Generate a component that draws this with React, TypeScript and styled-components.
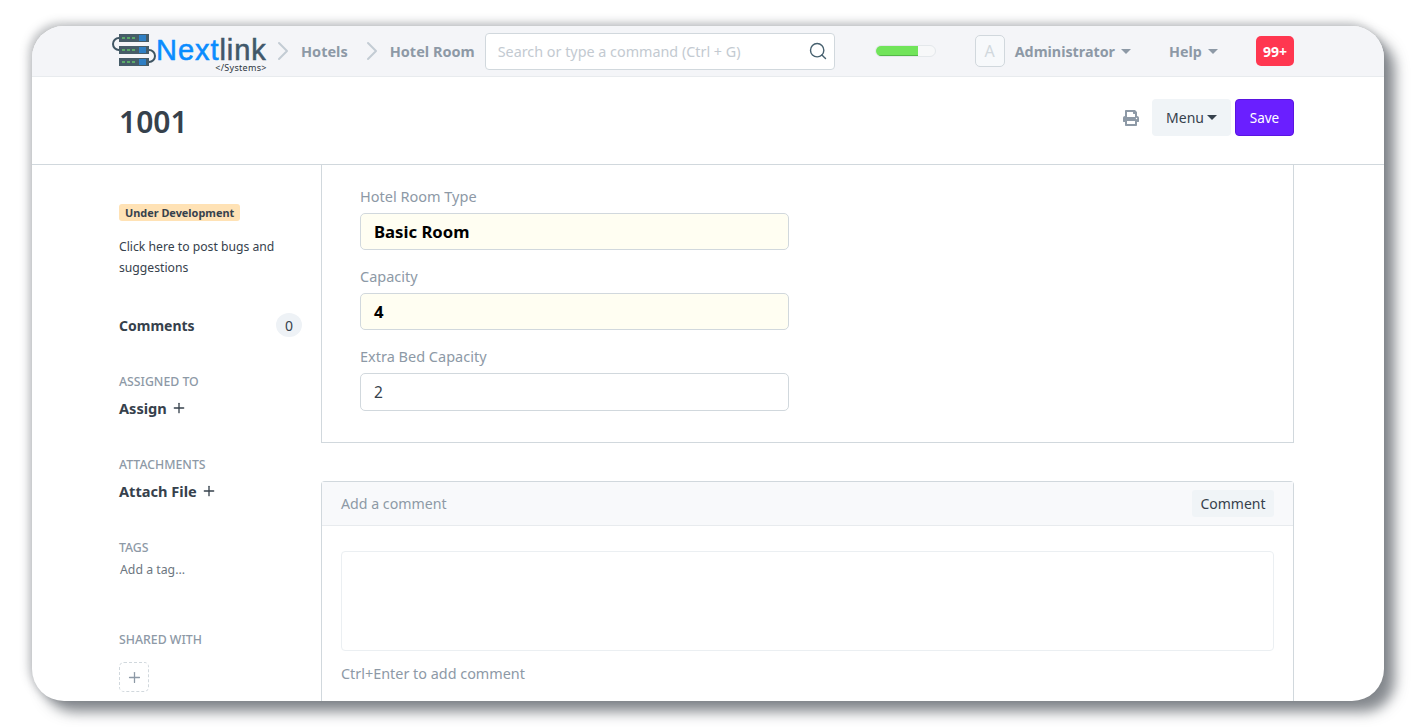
import React from 'react'
import styled, { createGlobalStyle } from 'styled-components'
import { Search, Plus, ChevronRight } from 'lucide-react'
import { FaPrint } from 'react-icons/fa'

const GlobalStyle = createGlobalStyle`
  html {
    overflow: hidden;
  }
  body {
    margin: 0;
    padding: 0;
    height: 727px;
    background: #fff;
    font-family: "Noto Sans", "Open Sans", sans-serif;
    color: #36414c;
  }
`

const Frame = styled.div`
  width: 1352px;
  height: 675px;
  margin: 0 0 0 32px;
  position: relative;
  top: 26px;
  border-radius: 32px;
  background: #fff;
  overflow: hidden;
  box-shadow: 11px 11px 13px rgba(60, 66, 74, 0.62), -3px -3px 10px rgba(60, 66, 74, 0.35);
`

const Navbar = styled.header`
  height: 50px;
  background: #f4f5f8;
  border-bottom: 1px solid #e8ebee;
  display: flex;
  align-items: center;
  padding-left: 80px;
  padding-right: 90px;
`

const LogoWrap = styled.div`
  display: flex;
  align-items: flex-start;
  width: 155px;
  height: 42px;
  flex: none;
  margin-top: 6px;
`

const LogoText = styled.div`
  position: relative;
  margin-top: 4px;
  font-family: "Liberation Sans", Arial, sans-serif;
  font-size: 29px;
  line-height: 26px;
  font-weight: 400;
  letter-spacing: 0.95px;
  -webkit-text-stroke: 0.55px currentColor;
  color: #0a8cff;
  white-space: nowrap;
`

const LogoDark = styled.span`
  color: #41586a;
`

const LogoSub = styled.div`
  position: absolute;
  right: 0;
  top: 26px;
  font-family: "Noto Sans", sans-serif;
  font-size: 9px;
  line-height: 10px;
  font-weight: 400;
  letter-spacing: 0.3px;
  -webkit-text-stroke: 0;
  color: #2c3640;
`

const Crumb = styled.span`
  margin-left: 2px;
  font-size: 14.5px;
  font-weight: 700;
  color: #8d99a6;
  white-space: nowrap;
`

const CrumbArrow = styled(ChevronRight)<{ $gap: number }>`
  margin-left: ${p => p.$gap}px;
  color: #c3ccd4;
  flex: none;
`

const SearchBox = styled.div`
  width: 350px;
  height: 37px;
  flex: none;
  box-sizing: border-box;
  margin-left: 10px;
  background: #fff;
  border: 1px solid #d1d8dd;
  border-radius: 4px;
  display: flex;
  align-items: center;
  justify-content: space-between;
  padding: 0 6px 0 12px;
  font-size: 14.35px;
  color: #c3cad1;
`

const SearchIcon = styled(Search)`
  color: #47616f;
`

const Progress = styled.div`
  width: 61px;
  height: 12px;
  flex: none;
  box-sizing: border-box;
  margin-left: 40px;
  background: #f7f8f9;
  border: 1px solid #e4e8eb;
  border-radius: 6px;
  overflow: hidden;
`

const ProgressFill = styled.div<{ $value: number }>`
  width: ${p => p.$value}%;
  height: 100%;
  background: #71e45a;
  border-bottom: 1px solid #54b848;
  box-sizing: border-box;
`

const Avatar = styled.div`
  width: 30px;
  height: 32px;
  flex: none;
  box-sizing: border-box;
  margin-left: 39px;
  border: 1px solid #d1d8dd;
  border-radius: 5px;
  background: #f7f9fb;
  color: #d1d8dd;
  font-size: 16px;
  display: flex;
  align-items: center;
  justify-content: center;
`

const NavItem = styled.div<{ $gap: number }>`
  margin-left: ${p => p.$gap}px;
  font-size: 14.3px;
  font-weight: 700;
  color: #8d99a6;
  display: flex;
  align-items: center;
  gap: 6px;
  white-space: nowrap;
`

const Caret = styled.span<{ $color?: string }>`
  width: 0;
  height: 0;
  border-left: 5px solid transparent;
  border-right: 5px solid transparent;
  border-top: 5px solid ${p => p.$color ?? '#8d99a6'};
`

const Badge = styled.div`
  width: 38px;
  height: 30px;
  margin-left: auto;
  border-radius: 5px;
  background: #ff3750;
  color: #fff;
  font-size: 14px;
  font-weight: 700;
  display: flex;
  align-items: center;
  justify-content: center;
`

const PageHead = styled.div`
  height: 88px;
  box-sizing: border-box;
  border-bottom: 1px solid #d1d8dd;
  display: flex;
  align-items: flex-start;
  padding: 22px 90px 0 87px;
`

const Title = styled.h1`
  margin: 1px 0 0;
  font-size: 30px;
  line-height: 44px;
  font-weight: 600;
  color: #36414c;
`

const Actions = styled.div`
  margin-left: auto;
  display: flex;
  align-items: center;
`

const PrintIcon = styled(FaPrint)`
  color: #8d99a6;
  margin-right: 13px;
`

const MenuButton = styled.button`
  width: 79px;
  height: 37px;
  border: none;
  border-radius: 4px;
  background: #f0f4f7;
  color: #36414c;
  font: inherit;
  font-size: 14px;
  display: flex;
  align-items: center;
  justify-content: center;
  gap: 3px;
  padding: 0;
`

const SaveButton = styled.button`
  width: 59px;
  height: 37px;
  margin-left: 4px;
  border: 1px solid #5a14e0;
  border-radius: 4px;
  background: #6a1fff;
  color: #fff;
  font: inherit;
  font-size: 13.5px;
  padding: 0;
`

const Body = styled.div`
  display: flex;
  padding: 0 90px 0 87px;
`

const Sidebar = styled.aside`
  width: 183px;
  margin-right: 19px;
  flex: none;
  padding-top: 35px;
`

const DevTag = styled.span`
  display: inline-block;
  background: #ffe2b5;
  border-radius: 3px;
  padding: 0 6px;
  font-size: 10.9px;
  line-height: 17px;
  font-weight: 700;
  color: #36414c;
`

const DevText = styled.p`
  margin: 14px 0 0;
  font-size: 12.2px;
  line-height: 21px;
  color: #36414c;
`

const CommentsRow = styled.div`
  display: flex;
  align-items: center;
  justify-content: space-between;
  margin-top: 34px;
  font-size: 14px;
  font-weight: 700;
  height: 26px;
`

const CountChip = styled.span`
  width: 26px;
  height: 24px;
  border-radius: 50%;
  background: #eef2f6;
  font-size: 14px;
  font-weight: 400;
  display: flex;
  align-items: center;
  justify-content: center;
`

const SideLabel = styled.div<{ $top: number }>`
  margin-top: ${p => p.$top}px;
  font-size: 12.3px;
  line-height: 16px;
  color: #8d99a6;
  font-weight: 500;
`

const SideAction = styled.div`
  margin-top: 8px;
  font-size: 14.6px;
  line-height: 20px;
  font-weight: 700;
  display: flex;
  align-items: center;
  gap: 4px;
`

const TagInput = styled.div`
  margin: 7px 0 0 1px;
  font-size: 12.3px;
  line-height: 14px;
  color: #6c7680;
`

const AddShare = styled.div`
  width: 30px;
  height: 30px;
  box-sizing: border-box;
  margin-top: 14px;
  border: 1px dashed #d1d8dd;
  border-radius: 5px;
  color: #8d99a6;
  display: flex;
  align-items: center;
  justify-content: center;
`

const Main = styled.main`
  flex: 1;
  min-width: 0;
`

const FormPanel = styled.section`
  height: 278px;
  box-sizing: border-box;
  border: 1px solid #d1d8dd;
  border-top: none;
  padding: 22px 0 0 38px;
`

const Field = styled.div`
  width: 429px;
  margin-bottom: 17px;
`

const FieldLabel = styled.label`
  display: block;
  font-size: 14.5px;
  line-height: 18px;
  color: #8d99a6;
  margin-bottom: 8px;
`

const Input = styled.div<{ $required?: boolean; $height?: number }>`
  height: ${p => p.$height ?? 37}px;
  box-sizing: border-box;
  display: flex;
  align-items: center;
  padding: 0 13px;
  border: 1px solid #d1d8dd;
  border-radius: 5px;
  background: ${p => (p.$required ? '#fffef2' : '#fff')};
  color: ${p => (p.$required ? '#000' : '#36414c')};
  font-size: ${p => (p.$required ? 16.7 : 15.5)}px;
  font-weight: ${p => (p.$required ? 700 : 400)};
`

const CommentBox = styled.section`
  margin-top: 38px;
  border: 1px solid #d1d8dd;
  border-bottom: none;
  border-radius: 4px 4px 0 0;
  height: 240px;
  box-sizing: border-box;
`

const CommentHead = styled.div`
  height: 44px;
  box-sizing: border-box;
  background: #f8f9fb;
  border-bottom: 1px solid #e8ebee;
  display: flex;
  align-items: center;
  justify-content: space-between;
  padding: 0 19px;
  font-size: 14.2px;
  color: #8d99a6;
`

const CommentButton = styled.button`
  width: 82px;
  height: 27px;
  border: none;
  border-radius: 3px;
  background: #f0f4f7;
  color: #36414c;
  font: inherit;
  font-size: 14px;
  padding: 0;
`

const CommentArea = styled.div`
  height: 100px;
  box-sizing: border-box;
  margin: 25px 19px 0;
  border: 1px solid #ebeff2;
  border-radius: 4px;
`

const CommentHint = styled.div`
  margin: 13px 19px 0;
  font-size: 14.4px;
  line-height: 20px;
  color: #8d99a6;
`

function ServerLogo() {
  const rows = [1, 13, 25]
  return (
    <svg width="44" height="34" viewBox="0 0 44 34" fill="none">
      <path d="M7 5A6 6 0 0 0 7 17" stroke="#3f5563" strokeWidth="2" />
      <path d="M37 17A6 6 0 0 1 37 29" stroke="#3f5563" strokeWidth="2" />
      {rows.map(y => (
        <g key={y}>
          <rect x="7" y={y} width="30" height="8" fill="#465c68" />
          <path d={`M10 ${y + 4}h14`} stroke="#63c36a" strokeWidth="1.4" strokeDasharray="3 2" />
          <rect x="27" y={y + 1} width="7" height="6" fill="#2f7fc4" />
        </g>
      ))}
    </svg>
  )
}

export default function App() {
  return (
    <>
      <GlobalStyle />
      <Frame>
        <Navbar>
          <LogoWrap>
            <ServerLogo />
            <LogoText>
              Next<LogoDark>link</LogoDark>
              <LogoSub>&lt;/Systems&gt;</LogoSub>
            </LogoText>
          </LogoWrap>
          <CrumbArrow $gap={0} size={32} strokeWidth={1.5} />
          <Crumb>Hotels</Crumb>
          <CrumbArrow $gap={8} size={32} strokeWidth={1.5} />
          <Crumb>Hotel Room</Crumb>
          <SearchBox>
            Search or type a command (Ctrl + G)
            <SearchIcon size={20} strokeWidth={1.7} />
          </SearchBox>
          <Progress>
            <ProgressFill $value={72} />
          </Progress>
          <Avatar>A</Avatar>
          <NavItem $gap={10}>
            Administrator <Caret />
          </NavItem>
          <NavItem $gap={38}>
            Help <Caret />
          </NavItem>
          <Badge>99+</Badge>
        </Navbar>
        <PageHead>
          <Title>1001</Title>
          <Actions>
            <PrintIcon size={16} />
            <MenuButton>
              Menu <Caret $color="#36414c" />
            </MenuButton>
            <SaveButton>Save</SaveButton>
          </Actions>
        </PageHead>
        <Body>
          <Sidebar>
            <DevTag>Under Development</DevTag>
            <DevText>Click here to post bugs and suggestions</DevText>
            <CommentsRow>
              Comments
              <CountChip>0</CountChip>
            </CommentsRow>
            <SideLabel $top={36}>ASSIGNED TO</SideLabel>
            <SideAction>
              Assign <Plus size={16} strokeWidth={2} />
            </SideAction>
            <SideLabel $top={39}>ATTACHMENTS</SideLabel>
            <SideAction>
              Attach File <Plus size={16} strokeWidth={2} />
            </SideAction>
            <SideLabel $top={39}>TAGS</SideLabel>
            <TagInput>Add a tag...</TagInput>
            <SideLabel $top={55}>SHARED WITH</SideLabel>
            <AddShare>
              <Plus size={17} strokeWidth={1.8} />
            </AddShare>
          </Sidebar>
          <Main>
            <FormPanel>
              <Field>
                <FieldLabel>Hotel Room Type</FieldLabel>
                <Input $required>Basic Room</Input>
              </Field>
              <Field>
                <FieldLabel>Capacity</FieldLabel>
                <Input $required>4</Input>
              </Field>
              <Field>
                <FieldLabel>Extra Bed Capacity</FieldLabel>
                <Input $height={38}>2</Input>
              </Field>
            </FormPanel>
            <CommentBox>
              <CommentHead>
                Add a comment
                <CommentButton>Comment</CommentButton>
              </CommentHead>
              <CommentArea />
              <CommentHint>Ctrl+Enter to add comment</CommentHint>
            </CommentBox>
          </Main>
        </Body>
      </Frame>
    </>
  )
}
